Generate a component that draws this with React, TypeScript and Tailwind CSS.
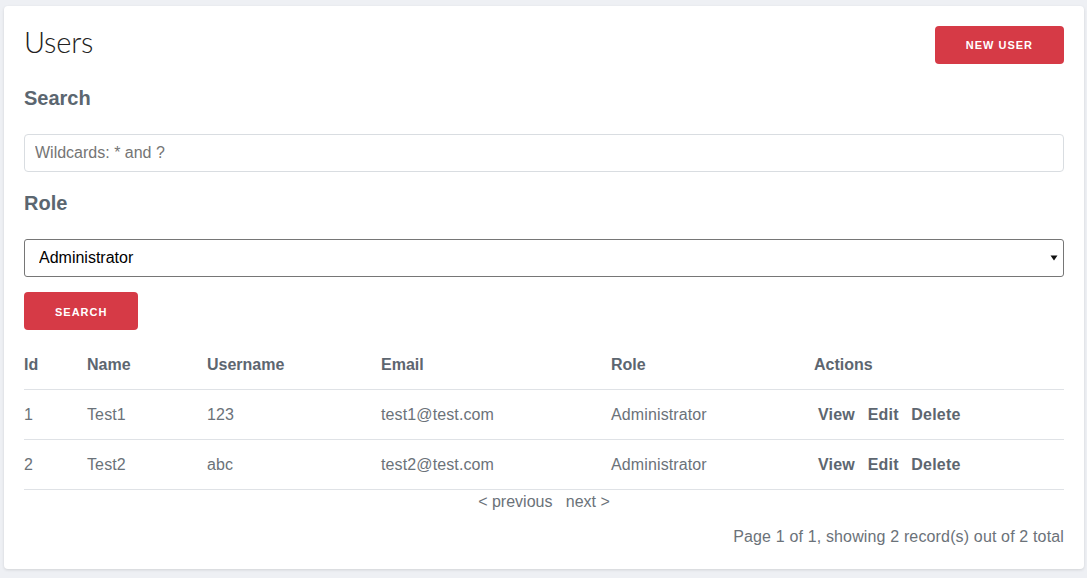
import React from "react";

const rows = [
  { id: 1, name: "Test1", username: "123", email: "test1@test.com", role: "Administrator" },
  { id: 2, name: "Test2", username: "abc", email: "test2@test.com", role: "Administrator" },
];

const cols = "grid grid-cols-[63px_120px_174px_230px_203px_1fr]";

export default function App() {
  return (
    <div className="min-h-[578px] bg-[#eef0f4] pl-[4px] pr-[3px] pt-[6px] pb-[8px] font-['Liberation_Sans',Arial,sans-serif]">
      <div className="bg-white rounded-[4px] shadow-[0_1px_3px_rgba(0,0,0,0.12)] px-[20px] pt-[20px] pb-[23px]">
        <div className="flex items-center justify-between h-[38px]">
          <h1 className="mb-[6px] font-['Lato',sans-serif] font-light text-[29px] leading-[32px] text-[#222] tracking-[-0.2px]">Users</h1>
          <button className="h-[38px] px-[31px] rounded-[4px] bg-[#d63a46] text-white text-[11px] font-bold tracking-[1px] leading-none">
            NEW USER
          </button>
        </div>

        <h2 className="mt-[22px] text-[20px] leading-[24px] font-bold text-[#5b6670]">Search</h2>
        <input
          className="mt-[24px] block w-full h-[38px] border border-[#d9dde1] rounded-[4px] px-[10px] text-[16px] text-[#333] placeholder:text-[#757575] outline-none"
          placeholder="Wildcards: * and ?"
        />

        <h2 className="mt-[19px] text-[20px] leading-[24px] font-bold text-[#5b6670]">Role</h2>
        <div className="relative mt-[24px]">
          <select className="block w-full h-[38px] appearance-none border border-[#767676] rounded-[3px] pl-[14px] pr-[24px] text-[16px] text-black bg-white outline-none">
            <option>Administrator</option>
          </select>
          <svg className="absolute right-[6px] top-[16px] pointer-events-none" width="8" height="6" viewBox="0 0 8 6">
            <path d="M0.5 0.5 L7.5 0.5 L4 5.5 Z" fill="#111" />
          </svg>
        </div>

        <button className="mt-[15px] h-[38px] px-[31px] rounded-[4px] bg-[#d63a46] text-white text-[11px] font-bold tracking-[1px] leading-none pt-[2px]">
          SEARCH
        </button>

        <div className="mt-[10px]">
          <div className={`${cols} h-[50px] items-center border-b border-[#dfe2e6] text-[16px] font-bold text-[#5d6670]`}>
            <div>Id</div>
            <div>Name</div>
            <div>Username</div>
            <div>Email</div>
            <div>Role</div>
            <div>Actions</div>
          </div>
          {rows.map((r) => (
            <div key={r.id} className={`${cols} h-[50px] items-center border-b border-[#dfe2e6] text-[16px] tracking-[0.12px] text-[#6b7279]`}>
              <div>{r.id}</div>
              <div>{r.name}</div>
              <div>{r.username}</div>
              <div>{r.email}</div>
              <div>{r.role}</div>
              <div className="font-bold text-[#5d6670] whitespace-pre tracking-[0.2px]">
                <a className="px-[4px] cursor-pointer">View</a> <a className="px-[4px] cursor-pointer">Edit</a> <a className="px-[4px] cursor-pointer">Delete</a>
              </div>
            </div>
          ))}
        </div>

        <div className="pt-[3px] text-center text-[16px] leading-[18px] text-[#6b7279] whitespace-pre">
          {"< previous   next >"}
        </div>
        <div className="mt-[17px] text-right text-[16px] leading-[18px] tracking-[0.15px] text-[#6b7279]">
          Page 1 of 1, showing 2 record(s) out of 2 total
        </div>
      </div>
    </div>
  );
}
